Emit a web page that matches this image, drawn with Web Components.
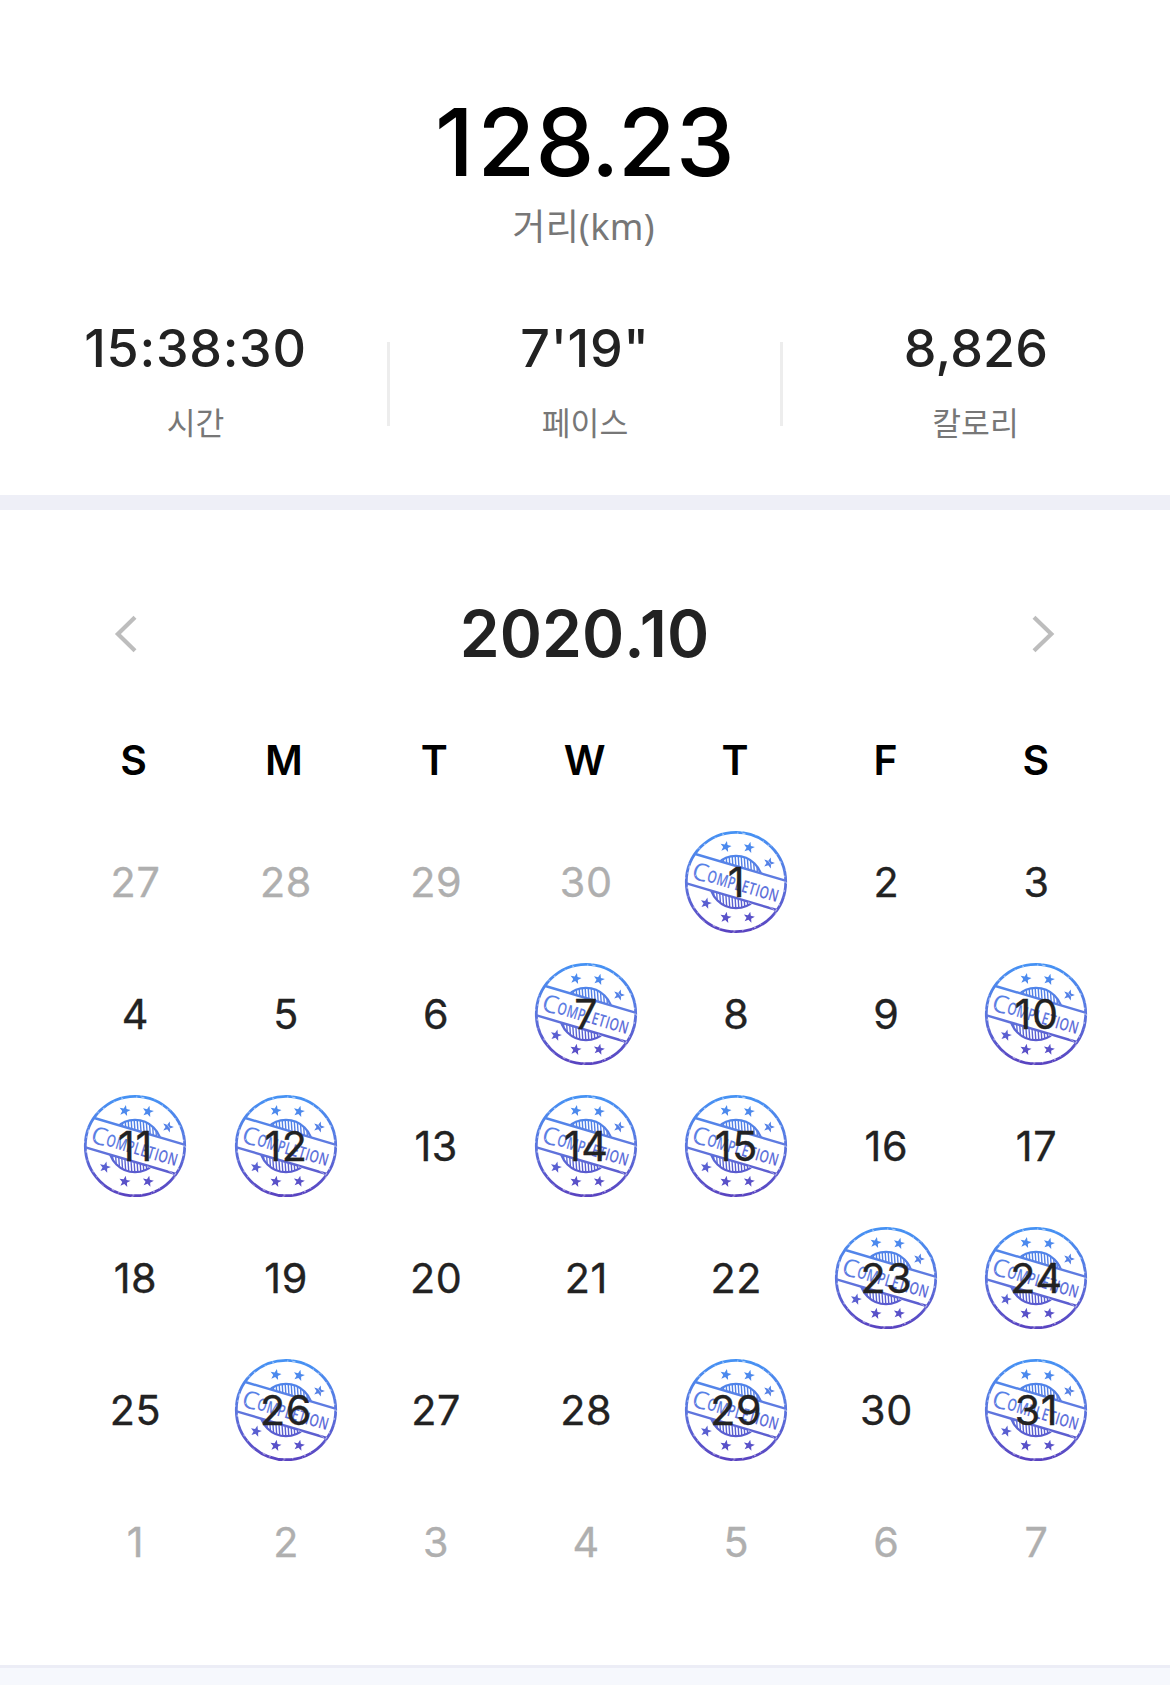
<!DOCTYPE html>
<html lang="ko">
<head>
<meta charset="utf-8">
<title>러닝 기록</title>
<style>
body { margin: 0; background: #fff; font-family: Inter, "Noto Sans CJK KR", sans-serif; color: #222; }
</style>
</head>
<body>
<run-report></run-report>
<script>
const define = (name, html, setup) => {
  const template = document.createElement('template');
  template.innerHTML = html;
  customElements.define(name, class extends HTMLElement {
    connectedCallback() {
      if (this.shadowRoot) return;
      const root = this.attachShadow({ mode: 'open' });
      root.append(template.content.cloneNode(true));
      if (setup) setup(this, root);
    }
  });
};

const starPath = (cx, cy, r, turn) => {
  let d = '';
  for (let i = 0; i < 10; i++) {
    const a = (turn - 90 + i * 36) * Math.PI / 180;
    const q = i % 2 ? r * 0.42 : r;
    d += (i ? 'L' : 'M') + (cx + q * Math.cos(a)).toFixed(2) + ' ' + (cy + q * Math.sin(a)).toFixed(2);
  }
  return d + 'Z';
};
const stars = [[-10.3, -35.3, 12], [13, -34.5, 14], [33, -19, 18], [-30, 21.3, 14], [-10.3, 35.6, 10], [13, 35.4, 12]];
let hatch = '';
for (let x = -26; x <= 26; x += 3) hatch += `M${x} -30V30`;

define('completion-stamp', `
<style>
  :host { display: block; width: 104px; height: 104px; }
  svg { display: block; overflow: visible; }
  text { font-family: "Open Sans", sans-serif; font-weight: 600; font-size: 17px; }
</style>
<svg width="104" height="104" viewBox="-52 -52 104 104" aria-hidden="true">
  <defs>
    <linearGradient id="ink" gradientUnits="userSpaceOnUse" x1="0" y1="-50" x2="0" y2="50">
      <stop offset="0" stop-color="#4592f4"/><stop offset=".5" stop-color="#5b75de"/><stop offset="1" stop-color="#5943c0"/>
    </linearGradient>
    <linearGradient id="tilted" gradientUnits="userSpaceOnUse" x1="0" y1="-50" x2="0" y2="50" gradientTransform="rotate(-16.5)">
      <stop offset="0" stop-color="#4592f4"/><stop offset=".5" stop-color="#6079df"/><stop offset="1" stop-color="#5943c0"/>
    </linearGradient>
    <clipPath id="lunes"><path transform="rotate(16.5)" d="M-60 -60H60V-15.3H-60ZM-60 15.3H60V60H-60Z"/></clipPath>
    <clipPath id="core"><circle r="26"/></clipPath>
  </defs>
  <circle r="49.7" fill="none" stroke="url(#ink)" stroke-width="2.8"/>
  <g clip-path="url(#lunes)" stroke="url(#ink)" fill="none">
    <circle r="26.2" stroke-width="2.3"/>
    <g clip-path="url(#core)"><path d="${hatch}" transform="rotate(-4)" stroke-width="1.4"/></g>
  </g>
  <path d="${stars.map(s => starPath(s[0], s[1], 5.9, s[2])).join('')}" fill="url(#ink)"/>
  <g transform="rotate(16.5)">
    <path d="M-47 -15.3H47M-47 15.3H47" stroke="url(#tilted)" stroke-width="2.4"/>
    <g fill="url(#tilted)">
      <text x="-44.8" y="9" textLength="16.5" lengthAdjust="spacingAndGlyphs" style="font-size:24.5px;font-weight:500">C</text>
      <text x="-29" y="7.9" textLength="74" lengthAdjust="spacingAndGlyphs">OMPLETION</text>
    </g>
  </g>
  <g fill="none" stroke="#fff">
    <circle r="49" stroke-width="1.2" stroke-dasharray="1 7 2 13 1.5 4 3 19 1 5 2 11" opacity=".5"/>
    <circle r="50.6" stroke-width=".9" stroke-dasharray="2 13 1 16 3 27 1 18" opacity=".45"/>
    <path d="M30 -24L37 -15M-41 -6L-33 -16M12 20L22 26M22 -4L30 4M33 24L38 28" stroke-width=".9" opacity=".5"/>
  </g>
</svg>`);

define('stat-item', `
<style>
  :host { display: flex; flex-direction: column; align-items: center; }
  .value { padding-top: 1px; font-size: 52px; font-weight: 500; line-height: 60px; letter-spacing: var(--tracking, .7px); }
  .label { margin-top: 24px; padding-right: var(--label-nudge, 0); font: 400 31.3px/40px "Noto Sans", "Noto Sans CJK KR", sans-serif; color: #777; }
</style>
<div class="value"><slot></slot></div>
<div class="label"></div>`, (el, root) => { root.querySelector('.label').textContent = el.getAttribute('label'); });

define('run-summary', `
<style>
  :host { display: flex; flex-direction: column; box-sizing: border-box; height: 495px; padding-top: 92px; text-align: center; }
  .total { font-size: 93.5px; font-weight: 500; line-height: 100px; letter-spacing: .4px; color: #000; }
  .wide { letter-spacing: 3.8px; }
  .tight { letter-spacing: -1.4px; }
  .unit { margin-top: 13px; padding-right: 3px; font: 400 36px/44px "Noto Sans", "Noto Sans CJK KR", sans-serif; letter-spacing: .3px; color: #777; }
  .row { display: grid; grid-template-columns: 387px 3px 390px 3px 387px; margin-top: 69px; }
  stat-item:first-child { padding-left: 4px; }
  stat-item:last-child { padding-right: 1px; --tracking: .2px; --label-nudge: 1px; }
  .rule { height: 84px; margin-top: 24px; background: #ededed; }
</style>
<div class="total"><span class="wide">1</span>2<span class="tight">8.</span>23</div>
<div class="unit">거리(km)</div>
<div class="row">
  <stat-item label="시간">15:38:30</stat-item>
  <div class="rule"></div>
  <stat-item label="페이스">7'19"</stat-item>
  <div class="rule"></div>
  <stat-item label="칼로리">8,826</stat-item>
</div>`);

define('calendar-day', `
<style>
  :host { display: grid; place-items: center; position: relative; font-size: 41.3px; font-weight: 400; letter-spacing: .6px; line-height: 50px; }
  :host([outside]) { color: #afafaf; }
  completion-stamp { position: absolute; left: 50%; top: 50%; transform: translate(-50%, -50%); }
  span { position: relative; padding-left: 1px; -webkit-text-stroke: .35px currentColor; }
</style>
<span><slot></slot></span>`, (el, root) => {
  if (el.hasAttribute('done')) root.querySelector('span').before(document.createElement('completion-stamp'));
});

define('run-calendar', `
<style>
  :host { display: block; box-sizing: border-box; height: 1155px; padding-top: 84px; }
  header { display: flex; align-items: center; justify-content: space-between; height: 80px; padding: 0 114px 0 113px; }
  h1 { margin: 0; font-size: 64px; font-weight: 600; line-height: 80px; letter-spacing: .1px; }
  .dot { letter-spacing: -5px; }
  svg { display: block; fill: none; stroke: #bdbdbd; stroke-width: 4.2; }
  .week { display: grid; grid-template-columns: repeat(7, 150.4px); padding-left: 58.3px; margin-top: 66px; font-size: 41px; font-weight: 600; line-height: 40px; text-align: center; color: #000; }
  .days { display: grid; grid-template-columns: 151px repeat(6, 150.1px); grid-auto-rows: 132px; padding-left: 59.5px; margin-top: 36px; }
</style>
<header>
  <svg width="24" height="40" viewBox="0 0 24 40"><path d="M22 3.3L4.9 20L22 36.7"/></svg>
  <h1>2020<span class="dot">.</span>10</h1>
  <svg width="24" height="40" viewBox="0 0 24 40"><path d="M2 3.3L19.3 20L2 36.7"/></svg>
</header>
<div class="week"></div>
<div class="days"></div>`, (el, root) => {
  const week = root.querySelector('.week');
  for (const letter of 'SMTWTFS') {
    const cell = document.createElement('span');
    cell.textContent = letter;
    week.append(cell);
  }
  const done = new Set([1, 7, 10, 11, 12, 14, 15, 23, 24, 26, 29, 31]);
  const days = root.querySelector('.days');
  for (let i = -3; i <= 38; i++) {
    const day = document.createElement('calendar-day');
    const outside = i < 1 || i > 31;
    day.textContent = i < 1 ? i + 30 : i > 31 ? i - 31 : i;
    if (outside) day.setAttribute('outside', '');
    else if (done.has(i)) day.setAttribute('done', '');
    days.append(day);
  }
});

define('run-report', `
<style>
  :host { display: flex; flex-direction: column; height: 1685px; overflow: hidden; }
  .band { height: 15px; flex: none; background: #eeeff7; }
  footer { flex: 1; border-top: 3px solid #ecedf6; background: #f6f8fd; }
</style>
<run-summary></run-summary>
<div class="band"></div>
<run-calendar></run-calendar>
<footer></footer>`);
</script>
</body>
</html>
